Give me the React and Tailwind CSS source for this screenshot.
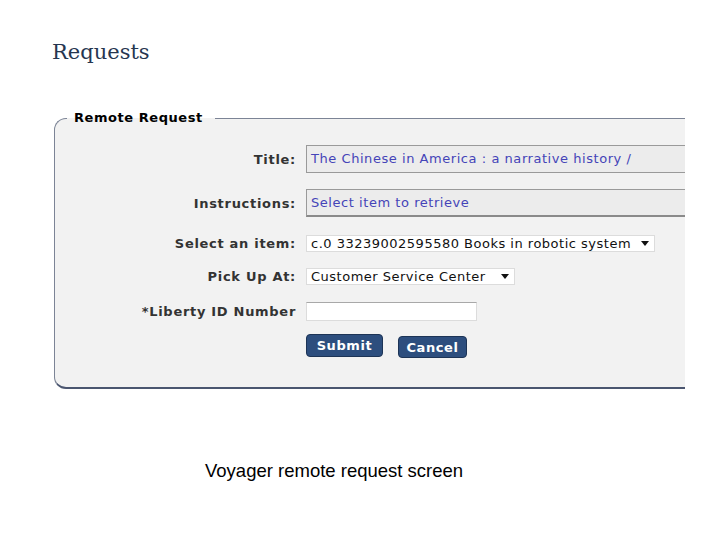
import React from "react";

function Caret() {
  return (
    <svg width="8" height="5" viewBox="0 0 8 5" className="shrink-0">
      <path d="M0 0 H8 L4 5 Z" fill="#111" />
    </svg>
  );
}

function Row({ label, children, className = "" }) {
  return (
    <div className={"flex items-center " + className}>
      <div className="w-[229px] text-right text-[13px] tracking-[0.7px] font-bold text-[#333] leading-none">
        {label}
      </div>
      <div className="ml-[10px] flex">{children}</div>
    </div>
  );
}

export default function App() {
  return (
    <div className="w-[720px] h-[540px] bg-white overflow-hidden font-['DejaVu_Sans',Verdana,sans-serif]">
      <h1 className="pl-[52px] pt-[38px] text-[21px] leading-[28px] text-[#263650] font-['DejaVu_Serif',Georgia,serif]">
        Requests
      </h1>
      <div className="ml-[54px] mt-[44px] w-[631px] overflow-hidden pb-[2px]">
        <fieldset className="w-[720px] rounded-[12px] border-t border-l border-[#7c8496] border-b-[2px] border-b-[#4b5670] bg-[#f2f2f2] pl-[12px] pb-[29px] m-0">
          <legend className="px-[7px] pr-[12px] text-[13px] tracking-[0.55px] font-bold text-black leading-[16px]">
            Remote Request
          </legend>
          <div className="flex flex-col">
            <Row label="Title:" className="mt-[19px]">
              <div className="w-[420px] h-[28px] border border-[#9a9a9a] bg-[#ececec] pl-[4px] flex items-center text-[13px] tracking-[0.55px] text-[#4444b8] whitespace-nowrap">
                The Chinese in America : a narrative history /
              </div>
            </Row>
            <Row label="Instructions:" className="mt-[16px]">
              <div className="w-[420px] h-[28px] border border-[#9a9a9a] border-b-[2px] border-b-[#8a8a8a] bg-[#ececec] pl-[4px] flex items-center text-[13px] tracking-[0.55px] text-[#4444b8] whitespace-nowrap">
                Select item to retrieve
              </div>
            </Row>
            <Row label="Select an item:" className="mt-[18px]">
              <div className="w-[349px] h-[17px] border border-[#dcdcdc] bg-white pl-[4px] pr-[5px] flex items-center justify-between text-[13px] tracking-[0.5px] text-[#111] whitespace-nowrap">
                <span>c.0 33239002595580 Books in robotic system</span>
                <Caret />
              </div>
            </Row>
            <Row label="Pick Up At:" className="mt-[16px]">
              <div className="w-[209px] h-[17px] border border-[#dcdcdc] bg-white pl-[4px] pr-[5px] flex items-center justify-between text-[13px] tracking-[0.5px] text-[#111] whitespace-nowrap">
                <span>Customer Service Center</span>
                <Caret />
              </div>
            </Row>
            <Row label="*Liberty ID Number" className="mt-[17px]">
              <div className="w-[171px] h-[19px] border border-[#dcdcdc] border-t-[#a8a8a8] bg-white" />
            </Row>
            <div className="flex mt-[13px] ml-[239px] items-start">
              <button className="w-[77px] h-[23px] rounded-[4px] bg-[#2d4e7e] border border-[#1d3456] text-white font-bold text-[13px] tracking-[0.6px] leading-none">
                Submit
              </button>
              <button className="ml-[15px] mt-[2px] w-[69px] h-[22px] rounded-[4px] bg-[#2d4e7e] border border-[#1d3456] text-white font-bold text-[13px] tracking-[0.6px] leading-none">
                Cancel
              </button>
            </div>
          </div>
        </fieldset>
      </div>
      <p className="pl-[205px] mt-[66px] text-[18.5px] text-black font-['Liberation_Sans',Arial,sans-serif]">
        Voyager remote request screen
      </p>
    </div>
  );
}
